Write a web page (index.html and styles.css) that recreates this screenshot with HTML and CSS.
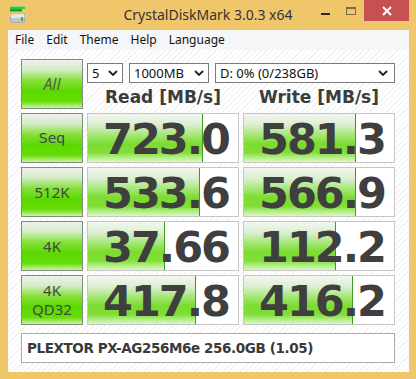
FILE: index.html
```html
<!DOCTYPE html>
<html>
  <head>
    <meta charset="utf-8" />
    <title>CrystalDiskMark 3.0.3 x64</title>
    <meta name="viewport" content="width=device-width, initial-scale=1" />
    <link rel="stylesheet" href="styles.css">
  </head>
  <body>
    <div class="window">
      <div class="titlebar">
        <div class="app-icon">
          <svg width="16" height="18" viewBox="0 0 16 18">
            <rect x="0" y="0" width="15" height="3" fill="#3cc23c" />
            <rect x="0" y="0" width="15" height="1" fill="#7ce07c" />
            <rect x="0" y="3" width="12" height="2.5" fill="#22a022" />
            <rect x="0" y="7" width="15" height="10" rx="2" fill="#9a9a9a" />
            <rect x="0.5" y="7.5" width="14" height="5" rx="1.5" fill="#e6e6e6" />
            <rect x="0.5" y="12" width="14" height="4.5" rx="1.5" fill="#c4c4c4" />
            <rect x="11" y="11" width="2" height="4" fill="#30c030" />
          </svg>
        </div>
        <div class="title">CrystalDiskMark 3.0.3 x64</div>
        <div class="controls">
          <div class="ctl"><span class="min-dash"></span></div>
          <div class="ctl"><span class="max-box"></span></div>
          <div class="ctl close">
            <svg width="10" height="10" viewBox="0 0 10 10">
              <path d="M1 1 L9 9 M9 1 L1 9" stroke="#fff" stroke-width="2" />
            </svg>
          </div>
        </div>
      </div>
      <div class="frame">
        <div class="menu">
          <span>File</span>
          <span>Edit</span>
          <span>Theme</span>
          <span>Help</span>
          <span>Language</span>
        </div>
        <div class="client">
          <div class="grid">
            <div class="btn btn-all">All</div>
            <div class="top-right">
              <div class="selects">
                <div class="select sel-count">5<svg width="10" height="6" viewBox="0 0 10 6"><polyline points="1,1 5,5 9,1" fill="none" stroke="#222" stroke-width="1.8" /></svg></div>
                <div class="select sel-size">1000MB<svg width="10" height="6" viewBox="0 0 10 6"><polyline points="1,1 5,5 9,1" fill="none" stroke="#222" stroke-width="1.8" /></svg></div>
                <div class="select sel-drive">D: 0% (0/238GB)<svg width="10" height="6" viewBox="0 0 10 6"><polyline points="1,1 5,5 9,1" fill="none" stroke="#222" stroke-width="1.8" /></svg></div>
              </div>
              <div class="heads">
                <div class="head">Read [MB/s]</div>
                <div class="head">Write [MB/s]</div>
              </div>
            </div>

            <div class="btn btn-seq">Seq</div>
            <div class="val"><div class="bar" style="width: 114px"></div><span>723.0</span></div>
            <div class="val"><div class="bar" style="width: 111px"></div><span>581.3</span></div>

            <div class="btn">512K</div>
            <div class="val"><div class="bar" style="width: 111px"></div><span>533.6</span></div>
            <div class="val"><div class="bar" style="width: 111px"></div><span>566.9</span></div>

            <div class="btn">4K</div>
            <div class="val"><div class="bar" style="width: 76px"></div><span>37.66</span></div>
            <div class="val"><div class="bar" style="width: 91px"></div><span>112.2</span></div>

            <div class="btn btn-two">4K<br />QD32</div>
            <div class="val"><div class="bar" style="width: 107px"></div><span>417.8</span></div>
            <div class="val"><div class="bar" style="width: 108px"></div><span>416.2</span></div>
          </div>
          <div class="info">PLEXTOR PX-AG256M6e 256.0GB (1.05)</div>
        </div>
      </div>
    </div>
  </body>
</html>
```

FILE: styles.css
```css
body {
  margin: 0;
  padding: 0;
  font-family: "Noto Sans", sans-serif;
}
.window {
  width: 416px;
  height: 379px;
  background-color: #f0c66b;
  display: flex;
  flex-direction: column;
}
.titlebar {
  height: 30px;
  display: grid;
  grid-template-columns: 1fr auto 1fr;
  align-items: start;
}
.app-icon {
  padding: 6px 0 0 10px;
}
.title {
  font-size: 14px;
  color: #333;
  line-height: 30px;
}
.controls {
  display: flex;
  justify-content: flex-end;
  margin-right: 7px;
}
.ctl {
  width: 26px;
  height: 20px;
  display: flex;
  justify-content: center;
  align-items: flex-start;
}
.min-dash {
  width: 9px;
  height: 2px;
  margin-top: 13px;
  background: #2a2a2a;
}
.max-box {
  width: 8px;
  height: 5px;
  margin-top: 7px;
  border: 1px solid #7d6a45;
  border-top-width: 2px;
}
.ctl.close {
  width: 45px;
  height: 21px;
  background-color: #c75050;
  align-items: center;
}
.frame {
  flex: 1;
  margin: 0 7px 7px 8px;
  display: flex;
  flex-direction: column;
}
.menu {
  height: 20px;
  background-color: #f5f6f7;
  font-size: 12px;
  line-height: 20px;
  color: #111;
  display: flex;
  padding-left: 1px;
}
.menu span {
  padding: 0 6px;
}
.client {
  flex: 1;
  padding: 9px 14px 0 13px;
  background: repeating-linear-gradient(135deg, #ffffff 0 3px, #f1f1f1 3px 4px);
}
.grid {
  display: grid;
  grid-template-columns: 62px 152px 152px;
  grid-auto-rows: 50px;
  gap: 4px;
}
.btn {
  box-sizing: border-box;
  border: 1px solid #7f8d7f;
  background: linear-gradient(#eef1ec 0%, #d6ecc8 20%, #86e03a 42%, #5cd800 65%, #66dc08 86%, #c8f5a0 100%);
  display: flex;
  justify-content: center;
  align-items: center;
  text-align: center;
  font-size: 15px;
  color: #3f4a3f;
}
.btn-all {
  font-style: italic;
  font-size: 16px;
  color: #555e55;
}
.btn-seq {
  font-family: "DejaVu Sans", sans-serif;
  font-size: 14px;
  color: #444452;
}
.btn-two {
  line-height: 19px;
}
.top-right {
  grid-column: 2 / 4;
}
.selects {
  display: flex;
  gap: 6px;
  margin-top: 4px;
}
.select {
  box-sizing: border-box;
  height: 20px;
  border: 1px solid #7a7a7a;
  background: #fff;
  font-size: 13px;
  line-height: 18px;
  color: #111;
  padding: 0 4px;
  display: flex;
  justify-content: space-between;
  align-items: center;
}
.sel-count {
  width: 36px;
}
.sel-size {
  width: 80px;
}
.sel-drive {
  flex: 1;
  padding-right: 6px;
}
.heads {
  display: grid;
  grid-template-columns: 152px 152px;
  gap: 4px;
}
.head {
  font-family: "DejaVu Sans", sans-serif;
  font-weight: bold;
  font-size: 17px;
  color: #3c3c3c;
  text-align: center;
  padding-top: 3px;
  line-height: 23px;
}
.val {
  box-sizing: border-box;
  position: relative;
  border: 1px solid #c6c6c6;
  background: #fff;
  display: flex;
  justify-content: flex-end;
  align-items: center;
  padding-right: 9px;
}
.bar {
  position: absolute;
  left: 0;
  top: 0;
  bottom: 0;
  border-right: 1px solid #3f9a25;
  background: linear-gradient(#f3f6f1 0%, #dcefd0 22%, #a2e672 45%, #7cdc30 62%, #80de36 80%, #b8f090 92%, #d8f8c0 100%);
}
.val span {
  position: relative;
  font-family: "DejaVu Sans", sans-serif;
  font-weight: bold;
  font-size: 43px;
  letter-spacing: -2px;
  color: #3f3f3f;
  line-height: 48px;
  margin-top: 1px;
}
.info {
  box-sizing: border-box;
  margin-top: 8px;
  height: 30px;
  border: 1px solid #a9a9a9;
  background: #fff;
  font-family: "DejaVu Sans", sans-serif;
  font-weight: bold;
  font-size: 13.5px;
  letter-spacing: -0.4px;
  color: #3a3a3a;
  line-height: 28px;
  padding-left: 5px;
}
```
